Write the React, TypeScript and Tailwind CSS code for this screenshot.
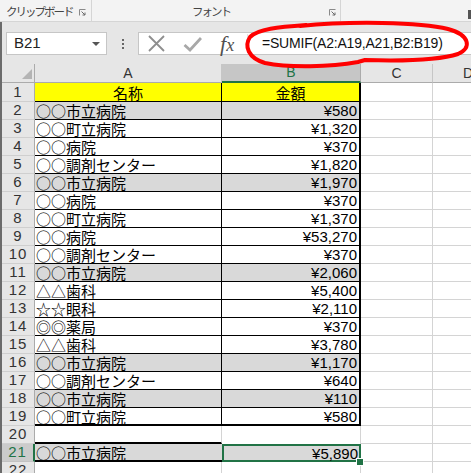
import React from 'react';

type Row = { name: string; amount: string; gray?: boolean };

const data: Row[] = [
  { name: '○○市立病院', amount: '¥580', gray: true },
  { name: '○○町立病院', amount: '¥1,320' },
  { name: '○○病院', amount: '¥370' },
  { name: '○○調剤センター', amount: '¥1,820' },
  { name: '○○市立病院', amount: '¥1,970', gray: true },
  { name: '○○病院', amount: '¥370' },
  { name: '○○町立病院', amount: '¥1,370' },
  { name: '○○病院', amount: '¥53,270' },
  { name: '○○調剤センター', amount: '¥370' },
  { name: '○○市立病院', amount: '¥2,060', gray: true },
  { name: '△△歯科', amount: '¥5,400' },
  { name: '☆☆眼科', amount: '¥2,110' },
  { name: '◎◎薬局', amount: '¥370' },
  { name: '△△歯科', amount: '¥3,780' },
  { name: '○○市立病院', amount: '¥1,170', gray: true },
  { name: '○○調剤センター', amount: '¥640' },
  { name: '○○市立病院', amount: '¥110', gray: true },
  { name: '○○町立病院', amount: '¥580' },
];

const cjk = "font-['Noto_Sans_CJK_JP',sans-serif]";
const num = "font-['Liberation_Sans',sans-serif]";

const Launcher = () => (
  <svg width="7" height="7" viewBox="0 0 7 7" className="shrink-0">
    <path d="M0.5 6.5V0.5H6.5" fill="none" stroke="#8a8a8a" />
    <path d="M2.5 2.5L6 6M6 3.5V6H3.5" fill="none" stroke="#6a6a6a" />
  </svg>
);

const RowHead = ({ n, selected }: { n: number; selected?: boolean }) => (
  <div
    className={
      selected
        ? `w-[33px] shrink-0 flex items-center justify-center bg-[#cbcbcb] border-r-2 border-r-[#217346] border-b border-b-[#c2c2c2] text-[15px] tracking-[1px] text-[#217346] ${num}`
        : `w-[33px] shrink-0 flex items-center justify-center bg-[#e6e6e6] border-r border-r-[#ababab] border-b border-b-[#cfcfcf] text-[15px] tracking-[1px] text-[#333] ${num}`
    }
  >
    {n}
  </div>
);

const Blank = () => (
  <>
    <div className="w-[72px] shrink-0 border-r border-b border-[#d4d4d4]" />
    <div className="flex-1 border-b border-[#d4d4d4]" />
  </>
);

export default function App() {
  return (
    <div className="relative w-[471px] h-[473px] overflow-hidden bg-white">
      {/* ribbon group labels */}
      <div className={`flex h-[22px] bg-[#f3f3f3] border-b border-[#d5d5d5] text-[11.5px] tracking-[-2px] whitespace-nowrap text-[#444] ${cjk}`}>
        <div className="w-[92px] flex items-center justify-between pl-[6px] pr-[5px] pt-[3px] border-r border-[#d5d5d5]">
          <span>クリップボード</span>
          <Launcher />
        </div>
        <div className="w-[249px] flex items-center pt-[3px] border-r border-[#d5d5d5]">
          <span className="ml-[100px]">フォント</span>
          <span className="ml-auto mr-[4px]">
            <Launcher />
          </span>
        </div>
        <div className="flex-1 flex justify-end items-end pb-[2px]">
          <div className="w-[3px] h-[9px] bg-[#555]" />
        </div>
      </div>

      <div className="border-l-2 border-[#6b6b6b]">
        {/* formula bar */}
        <div className="h-[42px] bg-[#e6e6e6] flex items-start pt-[10px]">
          <div className={`ml-[4px] w-[101px] h-[23px] bg-white border border-[#c6c6c6] flex items-center justify-between pl-[7px] pr-[6px] text-[15px] text-[#222] ${num}`}>
            <span>B21</span>
            <div className="w-0 h-0 border-l-[4px] border-r-[4px] border-t-[4px] border-l-transparent border-r-transparent border-t-[#555]" />
          </div>
          <div className="w-[31px] h-[23px] flex flex-col items-center justify-center gap-[2px]">
            <div className="w-[2px] h-[2px] bg-[#666]" />
            <div className="w-[2px] h-[2px] bg-[#666]" />
            <div className="w-[2px] h-[2px] bg-[#666]" />
          </div>
          <div className="flex-1 h-[23px] bg-white border border-r-0 border-[#c6c6c6] flex items-center">
            <svg width="17" height="17" viewBox="0 0 17 17" className="ml-[9px]">
              <path d="M1 1L16 16M16 1L1 16" stroke="#8e8e8e" strokeWidth="1.8" />
            </svg>
            <svg width="19" height="16" viewBox="0 0 19 16" className="ml-[18px]">
              <path d="M1.5 9L7 14L18 2" fill="none" stroke="#a8a8a8" strokeWidth="2.8" />
            </svg>
            <div className="ml-[18px] w-[22px] font-['Liberation_Serif',serif] italic text-[22px] leading-none text-[#505050]">
              f<span className="text-[18px]">x</span>
            </div>
            <div className="ml-[5px] w-px h-[19px] bg-[#e3e3e3]" />
            <span className={`ml-[14px] text-[14px] tracking-[-0.2px] text-[#111] ${num}`}>=SUMIF(A2:A19,A21,B2:B19)</span>
          </div>
        </div>

        {/* column headers */}
        <div className={`flex h-[19px] text-[14px] text-[#333] ${num}`}>
          <div className="w-[33px] shrink-0 bg-[#e6e6e6] border-r border-b border-[#ababab] flex items-end justify-end pr-[2px] pb-[3px]">
            <div className="w-0 h-0 border-l-[10px] border-l-transparent border-b-[10px] border-b-[#b4b4b4]" />
          </div>
          <div className="w-[187px] shrink-0 bg-[#e6e6e6] border-r border-r-[#c6c6c6] border-b border-b-[#ababab] flex items-center justify-center">A</div>
          <div className="w-[139px] shrink-0 bg-[#c6c6c6] border-r border-r-[#ababab] border-b-2 border-b-[#217346] flex items-center justify-center text-[#217346]">B</div>
          <div className="w-[72px] shrink-0 bg-[#e6e6e6] border-r border-r-[#c6c6c6] border-b border-b-[#ababab] flex items-center justify-center">C</div>
          <div className="flex-1 bg-[#e6e6e6] border-b border-b-[#ababab] flex items-center pl-[30px]">D</div>
        </div>

        {/* row 1 */}
        <div className="flex h-[19px]">
          <RowHead n={1} />
          <div className={`w-[187px] shrink-0 bg-[#ffff00] border-r border-b border-black flex items-center justify-center text-[15px] leading-none text-black ${cjk}`}>名称</div>
          <div className={`w-[139px] shrink-0 bg-[#ffff00] border-r-2 border-b border-black flex items-center justify-center text-[15px] leading-none text-black ${cjk}`}>金額</div>
          <Blank />
        </div>

        {/* rows 2-19 */}
        {data.map((r, i) => {
          const last = i === data.length - 1;
          return (
            <div key={i} className="flex h-[18px]">
              <RowHead n={i + 2} />
              <div
                className={`w-[187px] shrink-0 border-r border-black flex items-center pl-[1px] text-[15px] leading-none text-black ${cjk} ${r.gray ? 'bg-[#d9d9d9]' : 'bg-white'} ${last ? 'border-b-2' : 'border-b'}`}
              >
                {r.name}
              </div>
              <div
                className={`w-[139px] shrink-0 border-r-2 border-black flex items-center justify-end pr-[2px] text-[15px] leading-none text-black ${num} ${r.gray ? 'bg-[#d9d9d9]' : 'bg-white'} ${last ? 'border-b-2' : 'border-b'}`}
              >
                {r.amount}
              </div>
              <Blank />
            </div>
          );
        })}

        {/* row 20 */}
        <div className="flex h-[18px]">
          <RowHead n={20} />
          <div className="w-[187px] shrink-0 border-r border-r-[#d4d4d4] border-b-2 border-b-black" />
          <div className="w-[139px] shrink-0 border-r border-r-[#d4d4d4]" />
          <Blank />
        </div>

        {/* row 21 */}
        <div className="flex h-[18px]">
          <RowHead n={21} selected />
          <div className={`w-[187px] shrink-0 bg-[#d9d9d9] border-b-2 border-black flex items-center pl-[1px] text-[15px] leading-none text-black ${cjk}`}>
            ○○市立病院
          </div>
          <div className={`relative w-[139px] shrink-0 bg-[#d9d9d9] border-2 border-[#217346] flex items-center justify-end pr-[1px] text-[15px] leading-none text-black ${num}`}>
            ¥5,890
            <div className="absolute -right-[4px] -bottom-[5px] w-[6px] h-[6px] bg-[#217346] outline outline-1 outline-white" />
          </div>
          <Blank />
        </div>

        {/* row 22 */}
        <div className="flex h-[18px]">
          <RowHead n={22} />
          <div className="w-[187px] shrink-0 border-r border-b border-[#d4d4d4]" />
          <div className="w-[139px] shrink-0 border-r border-b border-[#d4d4d4]" />
          <Blank />
        </div>
      </div>

      {/* hand-drawn red annotation */}
      <svg className="absolute left-0 top-0 pointer-events-none" width="471" height="473" viewBox="0 0 471 473">
        <path
          d="M300 26C350 21 420 22 448 29C470 35 472 48 458 54C440 60 400 61 365 60L358 62C330 67 290 68 265 63C248 58 244 46 250 37C258 29 278 27 306 25"
          fill="none"
          stroke="#ff0000"
          strokeWidth="4"
          strokeLinecap="round"
          strokeLinejoin="round"
        />
      </svg>
    </div>
  );
}
